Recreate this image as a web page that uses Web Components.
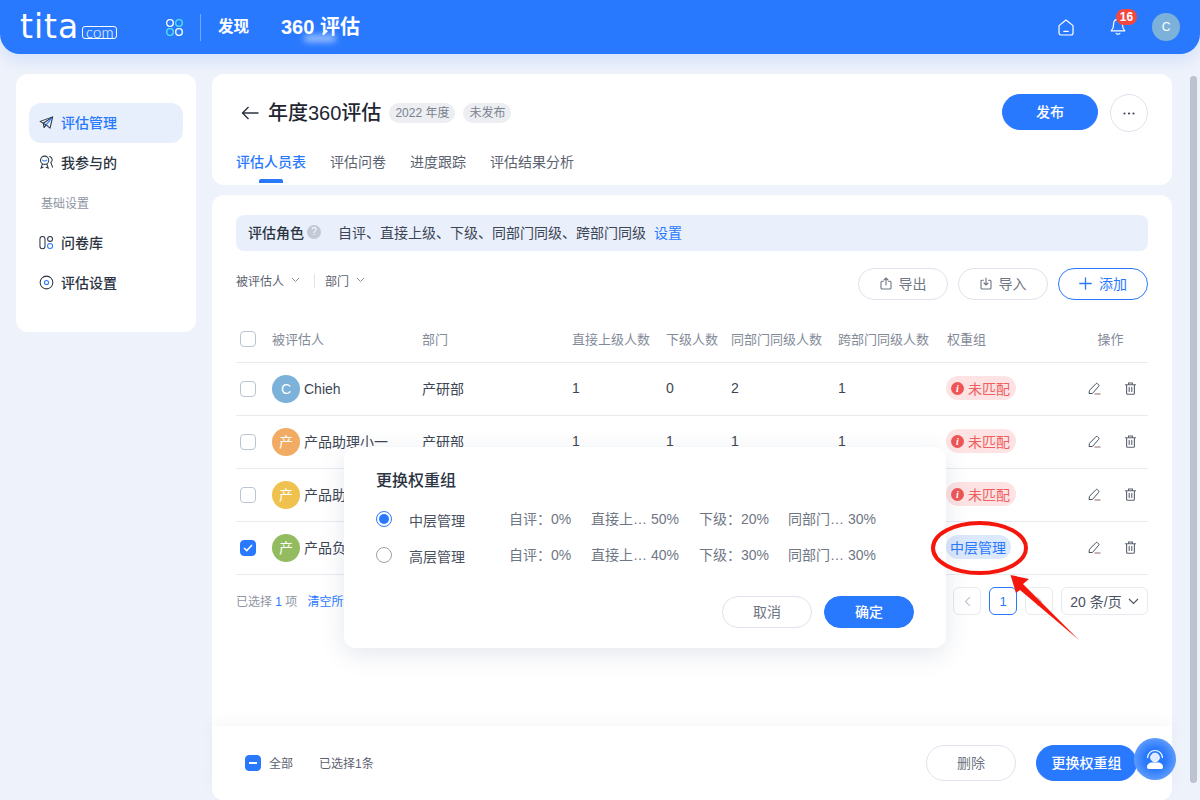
<!DOCTYPE html>
<html lang="zh">
<head>
<meta charset="utf-8">
<title>360 评估</title>
<style>
  html, body { margin: 0; height: 100%; overflow: hidden; background: #eef2fa; }
  body { font-family: "Liberation Sans", "Noto Sans CJK SC", sans-serif; color: #2b3442; }
</style>
</head>
<body>
<tita-app></tita-app>

<script>
// small helper: every component gets an open shadow root from a css + html pair
class Base extends HTMLElement {
  constructor() {
    super();
    this.attachShadow({ mode: "open" });
  }
  connectedCallback() {
    this.shadowRoot.innerHTML = "<style>" + this.css() + "</style>" + this.html();
  }
  css() { return ":host{display:block}"; }
  html() { return "<slot></slot>"; }
  attr(name, dflt) {
    return this.hasAttribute(name) ? this.getAttribute(name) : (dflt || "");
  }
}

const ICONS = {
  send: '<svg viewBox="0 0 16 16" fill="none" stroke="#2b3442" stroke-width="1.1" stroke-linejoin="round"><path d="M1.2 6.8 14.6 2 11.8 14 7.6 10.6Z"/><path d="M14.6 2 4.6 8.8 5.4 13.4 7.6 10.6"/><path d="M13.8 3 7.6 10.6" stroke="#2979ff"/></svg>',
  people: '<svg viewBox="0 0 16 16" fill="none" stroke="#2b3442" stroke-width="1.1" stroke-linecap="round"><circle cx="6" cy="5.6" r="4.4"/><path d="M3.8 5.4c.8 1.4 3.6 1.4 4.4 0" stroke="#2979ff"/><path d="M3.6 9.6 2.2 14 4.4 13M8.4 9.6 9.8 14 7.6 13"/><path d="M11.4 1.6c3.2 1.2 3.4 4.8 1.2 6.4l1.8 5"/></svg>',
  bank: '<svg viewBox="0 0 16 16" fill="none" stroke="#2b3442" stroke-width="1.1"><rect x="1" y="1.6" width="5.4" height="13" rx="2.7"/><circle cx="11.8" cy="4.2" r="2.6"/><circle cx="11.8" cy="11.8" r="2.7" stroke="#2979ff"/></svg>',
  gear: '<svg viewBox="0 0 16 16" fill="none" stroke="#2b3442" stroke-width="1.1"><circle cx="8" cy="8" r="6.8"/><circle cx="8" cy="8" r="2.2" stroke="#2979ff"/></svg>',
  edit: '<svg width="13" height="13" viewBox="0 0 13 13" fill="none" stroke="#4a5261" stroke-width="1" stroke-linejoin="round"><path d="M1 11.5 1.5 8.3 8 1.6c.4-.4 1-.4 1.4 0l1.3 1.3c.4.4.4 1 0 1.4L4.4 11.5Z"/><path d="M6.5 12h6" stroke="#8a6a6a"/></svg>',
  trash: '<svg width="13" height="13" viewBox="0 0 13 13" fill="none" stroke="#5b6270" stroke-width="1.1" stroke-linecap="round"><path d="M1.4 2.8h10.2M4.6 2.6V1h3.8v1.6M2.6 2.8v8.4c0 .6.4 1 1 1h5.8c.6 0 1-.4 1-1V2.8"/><path d="M5.2 5.4v4M7.8 5.4v4"/></svg>',
  up: '<svg width="12" height="13" viewBox="0 0 12 13" fill="none" stroke="#6f7684" stroke-width="1.1" stroke-linecap="round" stroke-linejoin="round"><path d="M3.4 4.2H2a1 1 0 0 0-1 1V11a1 1 0 0 0 1 1h8a1 1 0 0 0 1-1V5.2a1 1 0 0 0-1-1H8.6"/><path d="M6 8V1M4 3l2-2 2 2"/></svg>',
  down: '<svg width="12" height="13" viewBox="0 0 12 13" fill="none" stroke="#6f7684" stroke-width="1.1" stroke-linecap="round" stroke-linejoin="round"><path d="M3.4 3.2H2a1 1 0 0 0-1 1V11a1 1 0 0 0 1 1h8a1 1 0 0 0 1-1V4.2a1 1 0 0 0-1-1H8.6"/><path d="M6 1v7M4 6l2 2 2-2"/></svg>',
  plus: '<svg width="13" height="13" viewBox="0 0 13 13" fill="none" stroke="#2979ff" stroke-width="1.3" stroke-linecap="round"><path d="M6.5 .8v11.4M.8 6.5h11.4"/></svg>',
  chevron: '<svg width="9" height="6" viewBox="0 0 9 6" fill="none" stroke="#8a919e" stroke-width="1"><path d="M1 1l3.5 3.5L8 1"/></svg>'
};

class TitaTopbar extends Base {
  css() {
    return `
      :host { display: flex; align-items: center; height: 54px; padding: 0 20px; box-sizing: border-box;
        background: #2979ff; border-radius: 0 0 20px 20px; color: #fff; box-shadow: 0 6px 16px rgba(41,121,255,.14);
        position: relative; }
      .logo { display: flex; align-items: flex-end; width: 146px; height: 40px; }
      .tita { font: 400 33px/40px "DejaVu Sans", sans-serif; letter-spacing: 1px; }
      .com { font: 300 15px/10px "Lato", sans-serif; border: 1px solid #fff; border-radius: 3px; width: 33px; height: 11px;
        text-align: center; margin: 0 0 8px 3px; }
      .apps { margin-right: 17px; display: flex; }
      .sep { width: 1px; height: 27px; background: rgba(255,255,255,.35); margin-right: 17px; }
      .disc { font-size: 15.5px; font-weight: 700; width: 63px; margin-bottom: 4px; }
      .name { font-size: 20px; font-weight: 700; margin-bottom: 4px; }
      .glow { position: absolute; left: 304px; top: 35px; width: 32px; height: 7px; border-radius: 4px;
        background: rgba(255,255,255,.55); filter: blur(3px); }
      .right { margin-left: auto; display: flex; align-items: center; }
      .bell { position: relative; margin-left: 36px; width: 16px; height: 20px; }
      .badge { position: absolute; left: 6px; top: -8px; width: 21px; height: 16px; border-radius: 8px; background: #f2483f;
        font-size: 12px; font-weight: 700; line-height: 16px; text-align: center; }
      .me { margin-left: 26px; width: 28px; height: 28px; border-radius: 50%; background: #7cb1d9;
        text-align: center; line-height: 28px; font-size: 12px; }`;
  }
  html() {
    return `
      <div class="logo"><span class="tita">tita</span><span class="com">com</span></div>
      <div class="apps"><svg width="17" height="17" viewBox="0 0 17 17" fill="none" stroke-width="1.3">
        <rect x=".7" y=".7" width="6.6" height="6.6" rx="3" stroke="#fff"/><rect x="9.7" y=".7" width="6.6" height="6.6" rx="3" stroke="#4fe3ee"/>
        <rect x=".7" y="9.7" width="6.6" height="6.6" rx="3" stroke="#4fe3ee"/><rect x="9.7" y="9.7" width="6.6" height="6.6" rx="3" stroke="#fff"/></svg></div>
      <div class="sep"></div>
      <div class="disc">发现</div>
      <div class="name">360 评估</div>
      <div class="glow"></div>
      <div class="right">
        <svg width="16" height="17" viewBox="0 0 16 17" fill="none" stroke="#fff" stroke-width="1.2" stroke-linecap="round" stroke-linejoin="round">
          <path d="M1 6.6 8 1l7 5.6V14a2 2 0 0 1-2 2H3a2 2 0 0 1-2-2Z"/><path d="M5.8 12.4h4.4"/></svg>
        <div class="bell">
          <svg width="16" height="20" viewBox="0 0 16 20" fill="none" stroke="#fff" stroke-width="1.2" stroke-linecap="round" stroke-linejoin="round">
            <path d="M8 2.4c-2.8 0-4.4 2.2-4.4 4.8 0 3.4-1 5.2-2.4 6.6h13.6c-1.4-1.4-2.4-3.2-2.4-6.6 0-2.6-1.6-4.8-4.4-4.8Z"/><path d="M6.2 16.4c.5 1 3.1 1 3.6 0"/></svg>
          <div class="badge">16</div>
        </div>
        <div class="me">C</div>
      </div>`;
  }
}

class NavItem extends Base {
  css() {
    return `
      :host { display: flex; align-items: center; height: 40px; padding: 0 0 2px 10px; box-sizing: border-box; border-radius: 12px;
        font-size: 14px; font-weight: 500; color: #2b3442; }
      :host([active]) { background: #e7effd; color: #2979ff; }
      .ic { width: 16px; height: 15px; margin-right: 6px; display: flex; }
      .ic svg { width: 15px; height: 15px; }`;
  }
  html() {
    return `<span class="ic">${ICONS[this.attr("icon")] || ""}</span><slot></slot>`;
  }
}

class TitaSidebar extends Base {
  css() {
    return `
      :host { display: block; width: 180px; height: 258px; box-sizing: border-box; padding: 29px 13px; flex: none;
        background: #fff; border-radius: 12px; }
      .group { height: 40px; line-height: 42px; padding-left: 12px; font-size: 12px; color: #8f96a3; }`;
  }
  html() {
    return `
      <nav-item icon="send" active>评估管理</nav-item>
      <nav-item icon="people">我参与的</nav-item>
      <div class="group">基础设置</div>
      <nav-item icon="bank">问卷库</nav-item>
      <nav-item icon="gear">评估设置</nav-item>`;
  }
}

class PillButton extends Base {
  css() {
    return `
      :host { display: inline-flex; align-items: center; justify-content: center; gap: 7px; box-sizing: border-box;
        width: 90px; height: 32px; padding-bottom: 2px; border-radius: 18px; border: 1px solid #dfe3ec; background: #fff;
        color: #6f7684; font-size: 14px; }
      :host([primary]) { background: #2979ff; border-color: #2979ff; color: #fff; font-weight: 500; }
      :host([outline]) { border-color: #2979ff; color: #2979ff; }
      .ic { display: flex; }`;
  }
  html() {
    const icon = ICONS[this.attr("icon")];
    return (icon ? `<span class="ic">${icon}</span>` : "") + "<slot></slot>";
  }
}

class PageHead extends Base {
  css() {
    return `
      :host { display: block; height: 111px; box-sizing: border-box; padding: 20px 24px 0; background: #fff; border-radius: 12px; flex: none; }
      .top { display: flex; align-items: center; height: 38px; }
      .back { display: flex; margin: 0 9px 0 5px; }
      h1 { margin: 0 8px 3px 0; font-size: 20px; font-weight: 500; color: #1f2733; }
      .tag { height: 20px; line-height: 20px; padding: 0 6px; margin-right: 8px; border-radius: 10px; background: #eceef2;
        color: #7b828f; font-size: 12px; }
      .end { margin-left: auto; display: flex; align-items: flex-start; gap: 12px; height: 38px; }
      pill-button { width: 96px; height: 36px; }
      .more { width: 38px; height: 38px; box-sizing: border-box; border: 1px solid #dfe3ec; border-radius: 50%;
        display: flex; align-items: center; justify-content: center; }
      .tabs { display: flex; gap: 24px; margin-top: 20px; font-size: 14px; color: #5b6270; height: 20px; line-height: 20px; }
      .on { color: #2979ff; font-weight: 500; position: relative; }
      .on::after { content: ""; position: absolute; left: 23px; top: 27px; width: 24px; height: 4px; background: #2979ff; border-radius: 2px 2px 0 0; }`;
  }
  html() {
    return `
      <div class="top">
        <span class="back"><svg width="18" height="14" viewBox="0 0 18 14" fill="none" stroke="#2b3442" stroke-width="1.4"><path d="M17.5 7H1.5M7.5 1l-6 6 6 6"/></svg></span>
        <h1>年度360评估</h1>
        <span class="tag">2022 年度</span>
        <span class="tag">未发布</span>
        <div class="end">
          <pill-button primary>发布</pill-button>
          <div class="more"><svg width="12" height="3" viewBox="0 0 12 3" fill="#3d4554"><circle cx="1.5" cy="1.5" r="1.1"/><circle cx="6" cy="1.5" r="1.1"/><circle cx="10.5" cy="1.5" r="1.1"/></svg></div>
        </div>
      </div>
      <div class="tabs">
        <span class="on">评估人员表</span><span>评估问卷</span><span>进度跟踪</span><span>评估结果分析</span>
      </div>`;
  }
}

class RoleBar extends Base {
  css() {
    return `
      :host { display: flex; align-items: center; height: 36px; padding: 0 12px 2px; box-sizing: border-box; border-radius: 8px; background: #e9f0fc; font-size: 14px; color: #3d4554; }
      b { font-weight: 500; color: #2b3442; }
      .q { width: 14px; height: 14px; border-radius: 50%; background: #c3c9d5; color: #fff; font-size: 10px; line-height: 14px; text-align: center; margin: 0 17px 0 3px; }
      a { color: #2979ff; margin-left: 8px; }`;
  }
  html() {
    return `<b>评估角色</b><span class="q">?</span><span>自评、直接上级、下级、同部门同级、跨部门同级</span><a>设置</a>`;
  }
}

class CheckBox extends Base {
  css() {
    return `
      :host { display: inline-flex; align-items: center; justify-content: center; width: 16px; height: 16px; box-sizing: border-box;
        border: 1px solid #bcc3d1; border-radius: 4px; background: #fff; flex: none; }
      :host([checked]), :host([mixed]) { background: #2979ff; border-color: #2979ff; }`;
  }
  html() {
    if (this.hasAttribute("checked")) return '<svg width="10" height="8" viewBox="0 0 10 8" fill="none" stroke="#fff" stroke-width="1.5"><path d="M1 4l2.8 2.6L9 1"/></svg>';
    if (this.hasAttribute("mixed")) return '<svg width="8" height="2" viewBox="0 0 8 2"><rect width="8" height="2" fill="#fff"/></svg>';
    return "";
  }
}

const COLS = "grid-template-columns: 32px 150px 150px 94px 65px 107px 109px 126px 75px;";

class EvalRow extends Base {
  css() {
    return `
      :host { display: grid; ${COLS} align-items: center; height: 53px; padding-left: 4px; box-sizing: border-box;
        border-bottom: 1px solid #e8eaef; font-size: 14px; color: #3d4554; }
      .c { padding-bottom: 2px; }
      .who { display: flex; align-items: center; gap: 4px; white-space: nowrap; }
      .who .t { margin-bottom: 2px; }
      .who .latin { margin-bottom: 0; }
      .av { width: 28px; height: 28px; border-radius: 50%; color: #fff; font-size: 14px; line-height: 28px; text-align: center; flex: none; }
      .tag { display: inline-flex; align-items: center; gap: 4px; height: 24px; padding: 0 6px 0 5px; margin-left: -1px; border-radius: 12px; }
      .bad { background: #fde3e3; color: #ee5f5f; }
      .ok { background: #dce8fc; color: #2979ff; padding: 0 5px 0 4px; }
      .i { width: 13px; height: 13px; border-radius: 50%; background: #ee5555; color: #fff; font: italic 700 10px/13px "Liberation Serif", serif; text-align: center; }
      .ops { display: flex; gap: 23px; padding-left: 15px; }
      .ops span { display: flex; }`;
  }
  html() {
    const tag = this.attr("group")
      ? `<span class="tag ok">${this.attr("group")}</span>`
      : `<span class="tag bad"><span class="i">i</span>未匹配</span>`;
    const nameClass = this.hasAttribute("latin") ? "t latin" : "t";
    return `
      <check-box ${this.hasAttribute("checked") ? "checked" : ""}></check-box>
      <div class="who"><span class="av" style="background:${this.attr("color")}">${this.attr("mark")}</span><span class="${nameClass}">${this.attr("name")}</span></div>
      <div class="c">${this.attr("dept")}</div>
      <div class="c">${this.attr("a")}</div><div class="c">${this.attr("b")}</div><div class="c">${this.attr("c")}</div><div class="c">${this.attr("d")}</div>
      <div class="c">${tag}</div>
      <div class="ops c"><span>${ICONS.edit}</span><span>${ICONS.trash}</span></div>`;
  }
}

class EvalTable extends Base {
  css() {
    return `
      :host { display: block; margin-top: 16px; }
      .head { display: grid; ${COLS} align-items: center; height: 47px; padding-left: 4px; box-sizing: border-box;
        border-bottom: 1px solid #e8eaef; font-size: 13px; color: #848b98; white-space: nowrap; }
      .head div { padding-bottom: 2px; }
      .op { text-align: center; }`;
  }
  html() {
    return `
      <div class="head"><check-box></check-box><div>被评估人</div><div>部门</div><div>直接上级人数</div><div>下级人数</div><div>同部门同级人数</div><div>跨部门同级人数</div><div>权重组</div><div class="op">操作</div></div>
      <slot></slot>`;
  }
}

class ToolRow extends Base {
  css() {
    return `
      :host { display: flex; align-items: center; height: 32px; margin-top: 17px; font-size: 12px; color: #5b6270; }
      .f { display: flex; align-items: center; gap: 7px; margin-bottom: 8px; }
      .sep { width: 1px; height: 14px; background: #dfe3ec; margin: 0 10px 6px 14px; }
      .end { margin-left: auto; display: flex; gap: 10px; }`;
  }
  html() {
    return `
      <div class="f">被评估人 ${ICONS.chevron}</div><div class="sep"></div><div class="f">部门 ${ICONS.chevron}</div>
      <div class="end">
        <pill-button icon="up">导出</pill-button>
        <pill-button icon="down">导入</pill-button>
        <pill-button icon="plus" outline>添加</pill-button>
      </div>`;
  }
}

class PagerRow extends Base {
  css() {
    return `
      :host { display: flex; align-items: center; height: 28px; margin-top: 12px; font-size: 12px; color: #8f96a3; }
      .txt { margin-bottom: 2px; }
      .n { color: #2979ff; }
      a { color: #2979ff; margin: 0 0 2px 10px; }
      .end { margin-left: auto; display: flex; gap: 8px; align-items: center; }
      .p { width: 28px; height: 28px; box-sizing: border-box; border: 1px solid #e8eaef; border-radius: 6px; display: flex; align-items: center; justify-content: center; font-size: 13px; }
      .cur { border-color: #2979ff; color: #2979ff; }
      .size { width: 87px; height: 28px; box-sizing: border-box; border: 1px solid #e8eaef; border-radius: 6px; display: flex; align-items: center; justify-content: center; gap: 6px; font-size: 14px; color: #4a5261; }`;
  }
  html() {
    return `
      <span class="txt">已选择 <span class="n">1</span> 项</span><a>清空所</a>
      <div class="end">
        <div class="p"><svg width="7" height="11" viewBox="0 0 7 11" fill="none" stroke="#c3c9d5" stroke-width="1.2"><path d="M6 1 1.5 5.5 6 10"/></svg></div>
        <div class="p cur">1</div>
        <div class="p"><svg width="7" height="11" viewBox="0 0 7 11" fill="none" stroke="#c3c9d5" stroke-width="1.2"><path d="M1 1l4.5 4.5L1 10"/></svg></div>
        <div class="size">20 条/页 <svg width="11" height="7" viewBox="0 0 11 7" fill="none" stroke="#4a5261" stroke-width="1.1"><path d="M1 1l4.5 4.5L10 1"/></svg></div>
      </div>`;
  }
}

class BulkBar extends Base {
  css() {
    return `
      :host { display: flex; align-items: center; height: 74px; margin-top: auto; padding: 0 35px 0 33px; background: #fff; font-size: 12px; color: #5b6270;
        border-radius: 0 0 12px 12px; box-shadow: 0 -6px 12px rgba(120,130,160,.05); }
      .all { margin: 0 26px 2px 8px; }
      .sel { margin-bottom: 2px; }
      .end { margin-left: auto; display: flex; gap: 20px; }
      pill-button { height: 36px; }
      .go { width: 101px; }`;
  }
  html() {
    return `
      <check-box mixed></check-box><span class="all">全部</span><span class="sel">已选择1条</span>
      <div class="end"><pill-button>删除</pill-button><pill-button class="go" primary>更换权重组</pill-button></div>`;
  }
}

class WeightDialog extends Base {
  css() {
    return `
      :host { position: absolute; left: 344px; top: 447px; width: 602px; height: 201px; box-sizing: border-box; padding: 23px 32px 0;
        background: #fff; border-radius: 12px; box-shadow: 0 6px 24px rgba(90,105,140,.16); font-size: 14px; color: #6f7684; }
      h2 { margin: 0 0 9px; font-size: 16px; line-height: 22px; font-weight: 500; color: #2b3442; }
      .row { display: grid; grid-template-columns: 33px 100px 82px 108px 89px auto; align-items: center; height: 36px; white-space: nowrap; }
      .row span { margin-bottom: 2px; }
      .row .label { color: #4a5261; margin: 2px 0 0; }
      .row .radio { width: 16px; height: 16px; box-sizing: border-box; border: 1px solid #9aa0ab; border-radius: 50%; margin: 0; }
      .row .on { border-color: #2979ff; position: relative; }
      .on::after { content: ""; position: absolute; inset: 2px; background: #2979ff; border-radius: 50%; }
      .btns { display: flex; justify-content: flex-end; gap: 12px; margin-top: 23px; }`;
  }
  html() {
    const row = (on, name, boss) => `
      <div class="row"><span class="radio ${on ? "on" : ""}"></span><span class="label">${name}</span>
        <span>自评：0%</span><span>直接上… ${boss}</span><span>下级：${on ? "20%" : "30%"}</span><span>同部门… 30%</span></div>`;
    return `
      <h2>更换权重组</h2>
      ${row(true, "中层管理", "50%")}
      ${row(false, "高层管理", "40%")}
      <div class="btns"><pill-button>取消</pill-button><pill-button primary>确定</pill-button></div>`;
  }
}

// red marker drawn over the screenshot: ellipse plus arrow
class RedMark extends Base {
  css() {
    return ":host { position: absolute; left: 920px; top: 510px; width: 180px; height: 140px; pointer-events: none; }";
  }
  html() {
    return `<svg width="180" height="140" viewBox="0 0 180 140">
      <ellipse cx="59.5" cy="38" rx="46.5" ry="25" fill="none" stroke="#f5170c" stroke-width="4"/>
      <path d="M90.5 65 109 69 103 74 159 130 100 80 96 83Z" fill="#f5170c"/></svg>`;
  }
}

class HelpBall extends Base {
  css() {
    return `
      :host { position: absolute; left: 1134px; top: 738px; width: 42px; height: 42px; border-radius: 50%;
        background: radial-gradient(circle, #2979ff 35%, #8ab6fb 100%); display: flex; align-items: center; justify-content: center; }`;
  }
  html() {
    return `<svg width="24" height="24" viewBox="0 0 24 24" fill="none"><path d="M4.5 11a7.5 7.5 0 0 1 15 0" stroke="#fff" stroke-width="1.2"/>
      <circle cx="12" cy="10.5" r="4.3" fill="#dfeaff" stroke="#fff"/><path d="M4 20c0-3 2.5-4.6 5-4.6h6c2.5 0 5 1.6 5 4.6 0 1.4-1 2-2 2H6c-1 0-2-.6-2-2Z" fill="#fff"/></svg>`;
  }
}

class TitaApp extends Base {
  css() {
    return `
      :host { display: block; position: relative; width: 1200px; height: 800px; overflow: hidden; background: #eef2fa; }
      .shell { display: flex; height: 746px; box-sizing: border-box; padding: 20px 3px 0 16px; gap: 16px; }
      .main { width: 960px; display: flex; flex-direction: column; gap: 10px; flex: none; }
      .card { flex: 1; display: flex; flex-direction: column; background: #fff; border-radius: 12px; }
      .pad { padding: 20px 24px 0; }
      .bar { width: 7px; height: 707px; margin: 2px 0 0 2px; background: #bcc2d0; border-radius: 4px; flex: none; }`;
  }
  html() {
    // rows 3 and 4: the cells behind the dialog stay empty, only the visible part of the name is kept
    return `
      <tita-topbar></tita-topbar>
      <div class="shell">
        <tita-sidebar></tita-sidebar>
        <div class="main">
          <page-head></page-head>
          <div class="card">
            <div class="pad">
              <role-bar></role-bar>
              <tool-row></tool-row>
              <eval-table>
                <eval-row latin mark="C" color="#7cb1d9" name="Chieh" dept="产研部" a="1" b="0" c="2" d="1"></eval-row>
                <eval-row mark="产" color="#f2ab62" name="产品助理小一" dept="产研部" a="1" b="1" c="1" d="1"></eval-row>
                <eval-row mark="产" color="#efc14e" name="产品助"></eval-row>
                <eval-row mark="产" color="#93bb5f" name="产品负" group="中层管理" checked></eval-row>
              </eval-table>
              <pager-row></pager-row>
            </div>
            <bulk-bar></bulk-bar>
          </div>
        </div>
        <div class="bar"></div>
      </div>
      <weight-dialog></weight-dialog>
      <red-mark></red-mark>
      <help-ball></help-ball>`;
  }
}

customElements.define("nav-item", NavItem);
customElements.define("pill-button", PillButton);
customElements.define("check-box", CheckBox);
customElements.define("tita-topbar", TitaTopbar);
customElements.define("tita-sidebar", TitaSidebar);
customElements.define("page-head", PageHead);
customElements.define("role-bar", RoleBar);
customElements.define("tool-row", ToolRow);
customElements.define("eval-row", EvalRow);
customElements.define("eval-table", EvalTable);
customElements.define("pager-row", PagerRow);
customElements.define("bulk-bar", BulkBar);
customElements.define("weight-dialog", WeightDialog);
customElements.define("red-mark", RedMark);
customElements.define("help-ball", HelpBall);
customElements.define("tita-app", TitaApp);
</script>
</body>
</html>
